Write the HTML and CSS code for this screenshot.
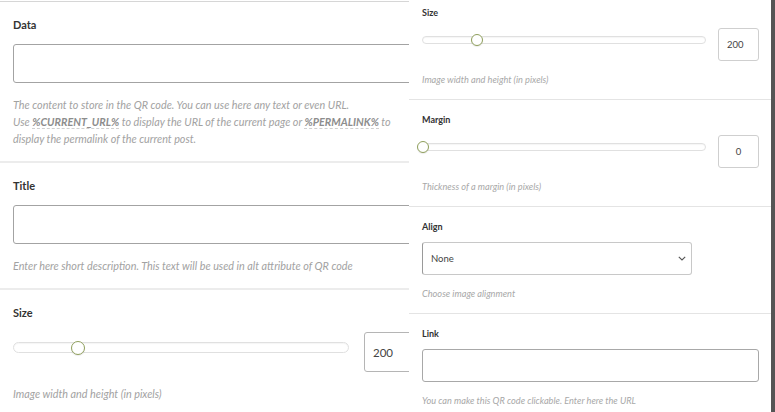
FILE: index.html
```html
<!DOCTYPE html>
<html lang="en">
<head>
<meta charset="utf-8">
<title>QR code settings</title>
<link rel="stylesheet" href="styles.css">
</head>
<body>
<div class="page">
  <div class="panel panel-left">
    <div class="inner">
      <section class="field">
        <div class="label">Data</div>
        <div class="text-input"></div>
        <p class="help">The content to store in the QR code. You can use here any text or even URL.<br>Use <b class="code">%CURRENT_URL%</b> to display the URL of the current page or <b class="code">%PERMALINK%</b> to<br>display the permalink of the current post.</p>
      </section>
      <section class="field">
        <div class="label">Title</div>
        <div class="text-input"></div>
        <p class="help">Enter here short description. This text will be used in alt attribute of QR code</p>
      </section>
      <section class="field">
        <div class="label">Size</div>
        <div class="slider-row">
          <div class="track"><span class="thumb" style="left:57px"></span></div>
          <div class="num-box">200</div>
        </div>
        <p class="help">Image width and height (in pixels)</p>
      </section>
    </div>
  </div>
  <div class="panel panel-right">
    <div class="inner">
      <section class="field">
        <div class="label">Size</div>
        <div class="slider-row">
          <div class="track"><span class="thumb" style="left:48px"></span></div>
          <div class="num-box">200</div>
        </div>
        <p class="help">Image width and height (in pixels)</p>
      </section>
      <section class="field">
        <div class="label">Margin</div>
        <div class="slider-row">
          <div class="track"><span class="thumb" style="left:-6px"></span></div>
          <div class="num-box num-center">0</div>
        </div>
        <p class="help">Thickness of a margin (in pixels)</p>
      </section>
      <section class="field">
        <div class="label">Align</div>
        <div class="select">
          <span>None</span>
          <svg class="chev" width="8" height="5" viewBox="0 0 8 5"><path d="M0.8 0.8 L4 4 L7.2 0.8" fill="none" stroke="#555" stroke-width="1.1"/></svg>
        </div>
        <p class="help">Choose image alignment</p>
      </section>
      <section class="field">
        <div class="label">Link</div>
        <div class="text-input"></div>
        <p class="help">You can make this QR code clickable. Enter here the URL</p>
      </section>
    </div>
  </div>
  <div class="scrollbar"></div>
</div>
</body>
</html>
```

FILE: styles.css
```css
* { box-sizing: border-box; }
html, body {
  margin: 0;
  padding: 0;
  background: #fff;
}
body {
  font-family: Lato, "Open Sans", "Liberation Sans", sans-serif;
  color: #333;
}
.page {
  display: flex;
  width: 775px;
  height: 412px;
  overflow: hidden;
}
.panel {
  flex: none;
  overflow: hidden;
  background: #fff;
}
.panel-left { width: 409px; }
.panel-right { width: 362px; }
.scrollbar {
  flex: none;
  width: 4px;
  background: #555;
}

/* left panel */
.panel-left .inner {
  width: 520px;
  margin-top: 1px;
  border-top: 1px solid #d6d6d6;
}
.field {
  border-bottom: 2px solid #ececec;
}
.panel-left .field {
  padding: 16px 13px 14px;
}
.panel-left .label {
  font-size: 11px;
  line-height: 14px;
  font-weight: 700;
  color: #333;
  margin-bottom: 12px;
}
.panel-left .text-input {
  height: 39px;
  border: 1px solid #a3a3a3;
  border-radius: 3px;
}
.help {
  margin: 0;
  font-style: italic;
  color: #a2a2a2;
  white-space: nowrap;
}
.panel-left .help {
  font-size: 10.8px;
  line-height: 17px;
  margin-top: 13px;
}
.code {
  font-weight: 700;
  color: #8d8d8d;
  border-bottom: 1px dashed #cfcfcf;
}
.slider-row {
  display: flex;
  align-items: flex-start;
}
.track {
  position: relative;
  border: 1px solid #e0e0e0;
  border-radius: 8px;
  background: #fff;
  box-shadow: inset 0 1px 1px rgba(0,0,0,0.04);
}
.thumb {
  position: absolute;
  top: 50%;
  border-radius: 50%;
  background: #fff;
  border: 1px solid #8f9f5c;
  box-shadow: 0 1px 1px rgba(0,0,0,0.08);
}
.panel-left .slider-row { gap: 15px; }
.panel-left .track {
  width: 336px;
  height: 11px;
  margin-top: 10px;
}
.panel-left .thumb {
  width: 14px;
  height: 14px;
  margin-top: -7px;
}
.num-box {
  border: 1px solid #b5b5b5;
  border-radius: 3px;
  color: #444;
  display: flex;
  align-items: center;
}
.panel-left .num-box {
  width: 60px;
  height: 40px;
  font-size: 11.5px;
  padding-left: 8px;
}

/* right panel */
.panel-right .inner {
  margin-top: -7px;
}
.panel-right .field {
  padding: 14px 12px 12px 13px;
  border-bottom-width: 1px;
  border-bottom-color: #e4e4e4;
}
.panel-right .label {
  font-size: 9px;
  line-height: 12px;
  font-weight: 700;
  color: #333;
  margin-bottom: 9px;
}
.panel-right .slider-row { gap: 12px; }
.panel-right .track {
  flex: 1;
  height: 8px;
  margin-top: 8px;
}
.panel-right .thumb {
  width: 12px;
  height: 12px;
  margin-top: -6px;
}
.panel-right .num-box {
  width: 41px;
  height: 33px;
  font-size: 9.5px;
  padding-left: 8px;
  border-color: #cfcfcf;
}
.panel-right .num-center {
  justify-content: center;
  padding-left: 0;
}
.select {
  width: 270px;
  height: 33px;
  border: 1px solid #c8c8c8;
  border-left-color: #9a9a9a;
  border-radius: 3px;
  display: flex;
  align-items: center;
  justify-content: space-between;
  padding: 0 5px 0 8px;
  font-size: 9.5px;
  color: #444;
}
.chev { display: block; }
.panel-right .text-input {
  height: 33px;
  border: 1px solid #a8a8a8;
  border-radius: 3px;
}
.panel-right .help {
  font-size: 9.2px;
  line-height: 14px;
  margin-top: 12px;
  color: #a8a8a8;
}
```
